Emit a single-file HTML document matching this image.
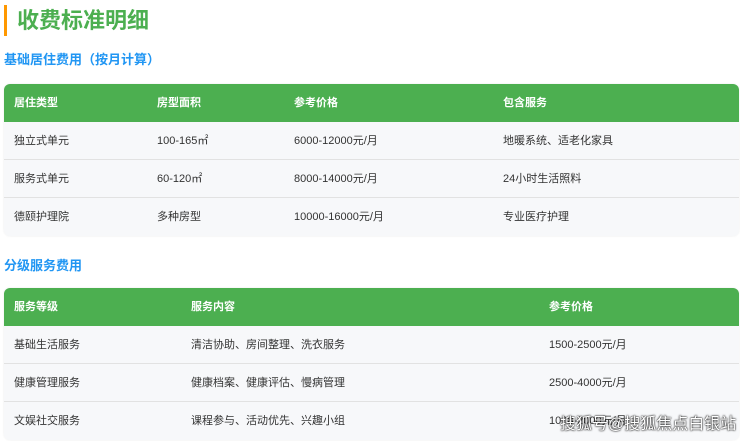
<!DOCTYPE html>
<html><head><meta charset="utf-8"><style>
*{margin:0;padding:0;box-sizing:border-box}
body{width:740px;height:441px;overflow:hidden;background:#fff;font-family:"Liberation Sans","Noto Sans CJK SC",sans-serif;position:relative}
.bar{position:absolute;left:4px;top:5px;width:3px;height:31px;background:#ff9800}
h1{position:absolute;left:17px;top:7px;font-size:22px;line-height:28px;color:#4caf50;font-weight:bold}
h2{position:absolute;left:4px;font-size:13px;line-height:18px;color:#2196f3;font-weight:bold}
.t{position:absolute;left:4px;width:735px;border-radius:6px;overflow:hidden;background:#f7f8fa;box-shadow:0 0 2px rgba(0,0,0,.08)}
.r{position:relative;height:38px;border-bottom:1px solid #e2e2e2;font-size:11px;color:#333}
.r:last-child{border-bottom:none}
.h{background:#4caf50;color:#fff;font-weight:bold;border-bottom:none}
.r span{position:absolute;top:0;line-height:38px;white-space:nowrap}
.wm{position:absolute;left:560px;top:410px;font-size:16px;color:#fff;text-shadow:0 0 2px #000,0 0 1px #000;letter-spacing:0px}
</style></head><body>
<div class="bar"></div>
<h1>收费标准明细</h1>
<h2 style="top:51px">基础居住费用（按月计算）</h2>
<div class="t" style="top:84px">
<div class="r h"><span style="left:10px">居住类型</span><span style="left:153px">房型面积</span><span style="left:290px">参考价格</span><span style="left:499px">包含服务</span></div>
<div class="r"><span style="left:10px">独立式单元</span><span style="left:153px">100-165㎡</span><span style="left:290px">6000-12000元/月</span><span style="left:499px">地暖系统、适老化家具</span></div>
<div class="r"><span style="left:10px">服务式单元</span><span style="left:153px">60-120㎡</span><span style="left:290px">8000-14000元/月</span><span style="left:499px">24小时生活照料</span></div>
<div class="r"><span style="left:10px">德颐护理院</span><span style="left:153px">多种房型</span><span style="left:290px">10000-16000元/月</span><span style="left:499px">专业医疗护理</span></div>
</div>
<h2 style="top:257px">分级服务费用</h2>
<div class="t" style="top:288px">
<div class="r h"><span style="left:10px">服务等级</span><span style="left:187px">服务内容</span><span style="left:545px">参考价格</span></div>
<div class="r"><span style="left:10px">基础生活服务</span><span style="left:187px">清洁协助、房间整理、洗衣服务</span><span style="left:545px">1500-2500元/月</span></div>
<div class="r"><span style="left:10px">健康管理服务</span><span style="left:187px">健康档案、健康评估、慢病管理</span><span style="left:545px">2500-4000元/月</span></div>
<div class="r"><span style="left:10px">文娱社交服务</span><span style="left:187px">课程参与、活动优先、兴趣小组</span><span style="left:545px">1000-2000元/月</span></div>
</div>
<div class="wm">搜狐号@搜狐焦点白银站</div>
</body></html>
